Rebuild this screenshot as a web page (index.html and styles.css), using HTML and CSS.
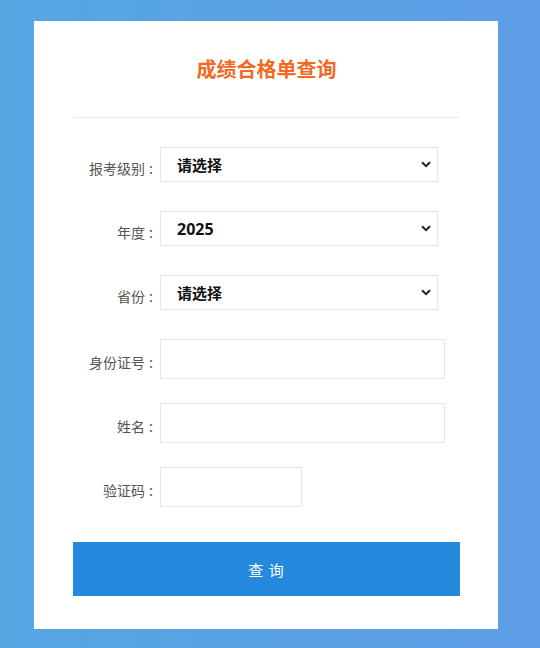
FILE: index.html
```html
<!DOCTYPE html>
<html lang="zh-CN">
<head>
<meta charset="utf-8">
<title>成绩合格单查询</title>
<link rel="stylesheet" href="styles.css">
</head>
<body>
<div class="card">
  <h1 class="title">成绩合格单查询</h1>
  <div class="divider"></div>
  <form class="form">
    <div class="row">
      <label class="label">报考级别<span class="colon">:</span></label>
      <div class="select-wrap">
        <select class="select"><option>请选择</option></select>
        <svg class="chev" viewBox="0 0 10 7" width="10" height="7"><path d="M1 1.2 L5 5.2 L9 1.2" fill="none" stroke="#222" stroke-width="2"/></svg>
      </div>
    </div>
    <div class="row">
      <label class="label">年度<span class="colon">:</span></label>
      <div class="select-wrap">
        <select class="select select-num"><option>2025</option></select>
        <svg class="chev" viewBox="0 0 10 7" width="10" height="7"><path d="M1 1.2 L5 5.2 L9 1.2" fill="none" stroke="#222" stroke-width="2"/></svg>
      </div>
    </div>
    <div class="row">
      <label class="label">省份<span class="colon">:</span></label>
      <div class="select-wrap">
        <select class="select"><option>请选择</option></select>
        <svg class="chev" viewBox="0 0 10 7" width="10" height="7"><path d="M1 1.2 L5 5.2 L9 1.2" fill="none" stroke="#222" stroke-width="2"/></svg>
      </div>
    </div>
    <div class="row">
      <label class="label label-input">身份证号<span class="colon">:</span></label>
      <input class="input" type="text">
    </div>
    <div class="row">
      <label class="label label-input">姓名<span class="colon">:</span></label>
      <input class="input" type="text">
    </div>
    <div class="row">
      <label class="label label-input">验证码<span class="colon">:</span></label>
      <input class="input input-short" type="text">
    </div>
    <button class="btn" type="button">查 询</button>
  </form>
</div>
</body>
</html>
```
FILE: styles.css
```css
* { box-sizing: border-box; }
html, body { margin: 0; padding: 0; }
body {
  width: 540px;
  height: 648px;
  overflow: hidden;
  background: linear-gradient(to right, #55a7e2, #5e9de7);
  font-family: "Noto Sans CJK SC", "Noto Sans", sans-serif;
  padding-top: 21px;
}
.card {
  margin-left: 34px;
  width: 464px;
  height: 608px;
  background: #fff;
  padding: 0 38px 0 39px;
}
.title {
  margin: 0;
  padding-top: 33px;
  height: 96px;
  text-align: center;
  font-size: 20px;
  line-height: 30px;
  font-weight: bold;
  color: #f2691f;
}
.divider {
  height: 1px;
  background: #ebebeb;
  margin-bottom: 29px;
}
.form { display: flex; flex-direction: column; }
.row {
  display: flex;
  align-items: flex-start;
  height: 40px;
  margin-bottom: 24px;
}
.label {
  width: 80px;
  flex: none;
  text-align: right;
  font-size: 14px;
  color: #555;
  line-height: 42px;
  margin-right: 7px;
}
.colon { margin-left: 4px; }
.label-input { line-height: 46px; }
.select-wrap {
  position: relative;
  width: 278px;
  height: 35px;
}
.select {
  appearance: none;
  -webkit-appearance: none;
  width: 100%;
  height: 35px;
  border: 1px solid #e6e6e6;
  background: #fff;
  padding: 0 0 0 16px;
  font-family: "Noto Sans CJK SC", sans-serif;
  font-size: 15px;
  font-weight: bold;
  color: #111;
  outline: none;
}
.select-num { font-size: 16px; font-family: "Open Sans", "Noto Sans CJK SC", sans-serif; }
.chev {
  position: absolute;
  right: 7px;
  top: 14px;
  pointer-events: none;
}
.input {
  width: 285px;
  height: 40px;
  border: 1px solid #e6e6e6;
  background: #fff;
  outline: none;
  padding: 0 8px;
}
.input-short { width: 142px; }
.btn {
  margin-top: 11px;
  width: 387px;
  height: 54px;
  border: none;
  background: #2589dd;
  color: #fff;
  font-family: "Noto Sans CJK SC", sans-serif;
  font-size: 15px;
  letter-spacing: 1px;
}
```
